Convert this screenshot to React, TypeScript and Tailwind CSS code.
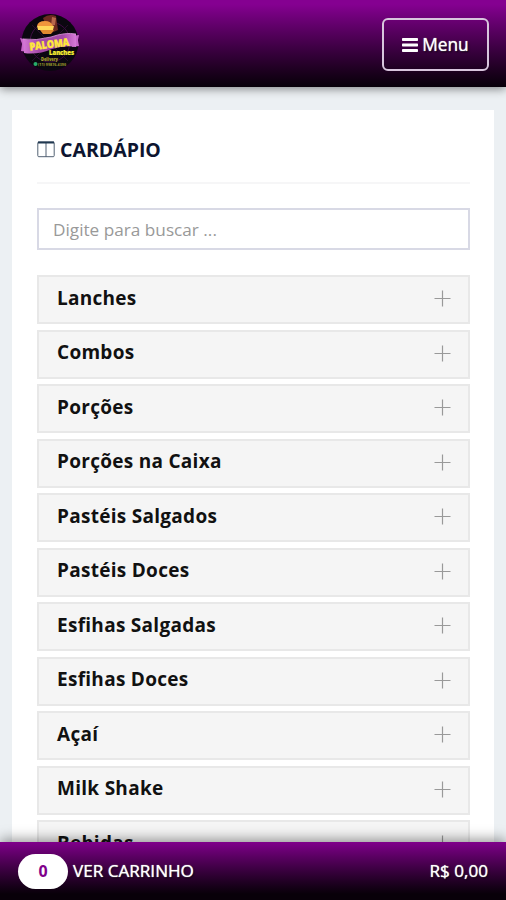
import React, { useState } from 'react';

const categories = [
    'Lanches',
    'Combos',
    'Porções',
    'Porções na Caixa',
    'Pastéis Salgados',
    'Pastéis Doces',
    'Esfihas Salgadas',
    'Esfihas Doces',
    'Açaí',
    'Milk Shake',
    'Bebidas',
];

const Logo: React.FC = () => (
    <svg width="60" height="60" viewBox="0 0 60 60" fontFamily="Open Sans, sans-serif" fontWeight="800">
        <defs>
            <linearGradient id="ribbon">
                <stop offset="0" stopColor="#d77ad8" />
                <stop offset="0.3" stopColor="#a54aa8" />
                <stop offset="0.75" stopColor="#a54aa8" />
                <stop offset="1" stopColor="#d77ad8" />
            </linearGradient>
        </defs>
        <circle cx="30" cy="30.5" r="28.5" fill="#0b0710" />
        <circle cx="30" cy="30" r="20" fill="none" stroke="#4a0c4f" strokeWidth="0.8" />
        <path d="M12 13l36 36M48 13L12 49" stroke="#35103a" strokeWidth="0.7" />
        {/* burger and drink */}
        <path d="M23 6q6-5 13-2l2 14-9 4z" fill="#6d2a20" />
        <path d="M32 5l4 1-1 7-4 1z" fill="#b8674c" />
        <path d="M17 14q1-5 8-5 6 0 8 5z" fill="#f0953c" />
        <path d="M17 14h17l-1 4H18z" fill="#ffd75a" />
        <path d="M20 18h14l-3 4h-8z" fill="#e08a30" />
        {/* ribbon */}
        <path d="M0 26l8 2v12l-7-1 1-7zM59 23l-7 1v11l7-1-1-6z" fill="#c867ca" />
        <path d="M3 27Q16 29 31 25 45 20 56 22v13Q45 33 32 37 18 43 4 41z" fill="url(#ribbon)" />
        <path d="M3 27Q16 29 31 25 45 20 56 22" fill="none" stroke="#e29be2" strokeWidth="0.8" />
        <text x="9.5" y="36" fontSize="10.5" textLength="40" lengthAdjust="spacingAndGlyphs" fill="#ffe83a" stroke="#ffe83a" strokeWidth="0.4" transform="rotate(-7 30 34)">PALOMA</text>
        <text x="29" y="43" fontSize="6" textLength="25" lengthAdjust="spacingAndGlyphs" fill="#f4ee35" stroke="#f4ee35" strokeWidth="0.2">Lanches</text>
        <text x="21" y="49.3" fontSize="4.5" textLength="17" lengthAdjust="spacingAndGlyphs" fill="#aaa52c">Delivery</text>
        <circle cx="15.5" cy="52" r="2" fill="#28ad6b" />
        <text x="18" y="54" fontSize="4" textLength="28" lengthAdjust="spacingAndGlyphs" fill="#8b872a">(11) 99876-4390</text>
    </svg>
);

const App: React.FC = () => {
    const [search, setSearch] = useState('');
    const visible = categories.filter(name => name.toLowerCase().includes(search.toLowerCase()));

    return (
        <div className="flex h-[900px] w-full flex-col overflow-hidden bg-[#ecf0f3] font-['Open_Sans',sans-serif] text-black">
            <header className="z-10 flex h-[87px] shrink-0 items-start justify-between bg-linear-to-b from-[#850091] from-5% to-[#080009] pl-5 pr-[17px] shadow-[0_2px_9px_rgba(0,0,0,0.45)]">
                <div className="pt-3"><Logo /></div>
                <button className="mt-[18px] flex h-[53px] w-[107px] items-center justify-center gap-1 rounded-md border-2 border-[#d8c5dd] text-[17.3px] text-white [text-shadow:0_0_1px_#fff,1px_1px_2px_#000]">
                    <svg width="16" height="14" viewBox="0 0 16 14" fill="#fff">
                        <rect width="16" height="3" rx="0.7" />
                        <rect y="5.5" width="16" height="3" rx="0.7" />
                        <rect y="11" width="16" height="3" rx="0.7" />
                    </svg>
                    <span>Menu</span>
                </button>
            </header>

            <main className="mx-3 mt-[23px] min-h-0 flex-1 overflow-hidden bg-white pl-[25px] pr-6">
                <div className="flex h-[74px] items-center gap-[5px] border-b-2 border-[#f6f6f7] pt-[7px]">
                    <svg width="18" height="17" viewBox="0 0 18 17" fill="none" stroke="#526173">
                        <rect x="0.8" y="1" width="16.4" height="14.7" rx="1" />
                        <path d="M9 2v14" />
                        <path d="M1 1.5h16" stroke="#203850" strokeWidth="2" />
                    </svg>
                    <h1 className="pt-px text-[19.5px] font-bold leading-none text-[#0d1530]">CARDÁPIO</h1>
                </div>

                <input
                    type="text"
                    value={search}
                    onChange={(e) => setSearch(e.target.value)}
                    placeholder="Digite para buscar ..."
                    className="mt-6 block h-[42px] w-full border-2 border-[#d8d9e5] px-[14px] text-[17.2px] outline-none placeholder:text-[#999]"
                />

                <div className="mt-[25px] flex flex-col gap-[5.5px]">
                    {visible.map(name => (
                        <button key={name} className="flex h-[49px] shrink-0 items-center justify-between border-2 border-[#e8e8e8] bg-[#f5f5f5] pl-[18px] pr-[17px] text-left">
                            <span className="pb-[3px] text-[19px] font-bold leading-none tracking-[0.28px] text-[#111]">{name}</span>
                            <svg className="-mt-[2px]" width="17" height="17" viewBox="0 0 17 17" stroke="#999" strokeWidth="1.2">
                                <path d="M8.5 0.5v16M0.5 8.5h16" />
                            </svg>
                        </button>
                    ))}
                </div>
            </main>

            <footer className="z-10 flex h-[58px] shrink-0 items-center bg-linear-to-b from-[#80008b] to-[#080009] to-90% pl-[18px] pr-[18px] text-[17.1px] text-white shadow-[0_-3px_12px_rgba(0,0,0,0.4)] [text-shadow:0_0_1px_#fff,1px_1px_2px_#000]">
                <span className="mr-[5px] flex h-[35px] w-[50px] items-center justify-center rounded-full bg-white text-[16px] font-bold text-[#80008b] [text-shadow:none]">0</span>
                <span>VER CARRINHO</span>
                <span className="ml-auto">R$ 0,00</span>
            </footer>
        </div>
    );
};

export default App;
